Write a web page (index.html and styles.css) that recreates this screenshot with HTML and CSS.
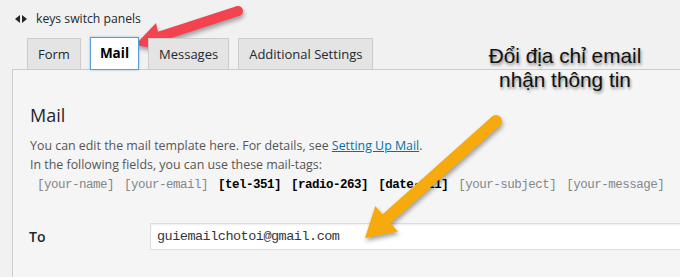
FILE: index.html
```html
<!DOCTYPE html>
<html lang="vi">
<head>
  <meta charset="UTF-8">
  <title>Mail settings</title>
  <link rel="stylesheet" href="styles.css">
</head>
<body>
  <div class="wrap">
    <p class="keys">
      <svg class="keys-icon" width="12" height="8" viewBox="0 0 12 8"><polygon points="0,4 5,0 5,8" /><polygon points="12,4 7,0 7,8" /></svg>
      keys switch panels
    </p>

    <div class="tabs">
      <span class="tab">Form</span>
      <span class="tab active">Mail</span>
      <span class="tab">Messages</span>
      <span class="tab">Additional Settings</span>
    </div>

    <div class="panel">
      <h2 class="title">Mail</h2>
      <p class="desc">You can edit the mail template here. For details, see <a href="#">Setting Up Mail</a>.<br>In the following fields, you can use these mail-tags:</p>
      <p class="tags">
        <span class="tag">[your-name]</span>
        <span class="tag">[your-email]</span>
        <span class="tag used">[tel-351]</span>
        <span class="tag used">[radio-263]</span>
        <span class="tag used">[date-611]</span>
        <span class="tag">[your-subject]</span>
        <span class="tag">[your-message]</span>
      </p>
      <div class="field">
        <label class="label" for="mailTo">To</label>
        <input id="mailTo" class="input" type="text" value="guiemailchotoi@gmail.com">
      </div>
    </div>
  </div>

  <!-- annotation overlay -->
  <div class="note">Đổi địa chỉ email<br>nhận thông tin</div>
  <svg class="arrows" width="680" height="277" viewBox="0 0 680 277">
    <g class="arrow-red">
      <circle cx="238" cy="11" r="5" />
      <polygon points="236.4,6.3 157.9,31.8 156,23 135,45 163,50 161.1,41.2 239.6,15.7" />
    </g>
    <g class="arrow-orange">
      <circle cx="496" cy="121" r="6" />
      <polygon points="492,116.5 382.6,214.2 375.3,206 365,238 397.9,231.4 390.6,223.2 500,125.5" />
    </g>
  </svg>
</body>
</html>
```

FILE: styles.css
```css
body { margin: 0; background-color: #f1f1f1; font-family: "Open Sans", Arial, sans-serif; color: #23282d; overflow: hidden; }
.wrap { padding: 0 0 0 12px; }

.keys { margin: 0; padding: 9px 0 0 3px; height: 19px; font-size: 12.2px; line-height: 17px; color: #23282d; display: flex; align-items: center; gap: 9px; }
.keys-icon { fill: #23282d; flex: none; }

.tabs { display: flex; align-items: flex-end; gap: 9px; padding-left: 15px; margin-top: 9px; position: relative; z-index: 2; }
.tab { box-sizing: border-box; height: 32px; padding: 0 10px; border: 1px solid #ccc; background-color: #e4e4e4; font-size: 13px; line-height: 30px; color: #23282d; }
.tab.active { height: 33px; padding: 0 9px; background-color: #fff; border-color: #5b9dd9; font-weight: 700; font-size: 13.5px; color: #000; box-shadow: 0 0 2px rgba(30,140,190,.5); }

.panel { margin-top: -1px; border-top: 1px solid #ccc; border-left: 1px solid #ccc; background-color: #f5f5f5; padding: 33px 0 40px 17px; }
.title { margin: 0; font-size: 18px; font-weight: 400; line-height: 24px; color: #23282d; }
.desc { margin: 9px 0 0; font-size: 12.4px; line-height: 19px; color: #555; }
.desc a { color: #0073aa; }
.tags { margin: 2px 0 0 7px; font-family: "Liberation Mono", monospace; font-size: 12.5px; letter-spacing: -0.5px; line-height: 19px; color: #82878c; white-space: nowrap; }
.tag { margin-right: 3px; }
.tag.used { color: #000; font-weight: 700; }

.field { display: flex; align-items: center; margin-top: 28px; margin-left: -1px; }
.label { flex: none; width: 121px; font-size: 14px; font-weight: 600; color: #23282d; }
.input { flex: none; box-sizing: border-box; width: 560px; height: 27px; padding: 0 6px; border: 1px solid #ddd; box-shadow: inset 0 1px 2px rgba(0,0,0,.07); background-color: #fff; font-family: "Liberation Mono", monospace; font-size: 13.5px; letter-spacing: -0.5px; color: #32373c; outline: none; }

.note { position: absolute; left: 445px; top: 44px; width: 240px; text-align: center; font-family: "Liberation Sans", Arial, sans-serif; font-size: 20.8px; line-height: 24px; color: #111; text-shadow: 1px 2px 3px rgba(0,0,0,.45); }
.arrows { position: absolute; left: 0; top: 0; pointer-events: none; }
.arrow-red { fill: #f2434f; filter: drop-shadow(1px 3px 2px rgba(0,0,0,.35)); }
.arrow-orange { fill: #f7aa0d; filter: drop-shadow(1px 3px 2px rgba(0,0,0,.35)); }
```
